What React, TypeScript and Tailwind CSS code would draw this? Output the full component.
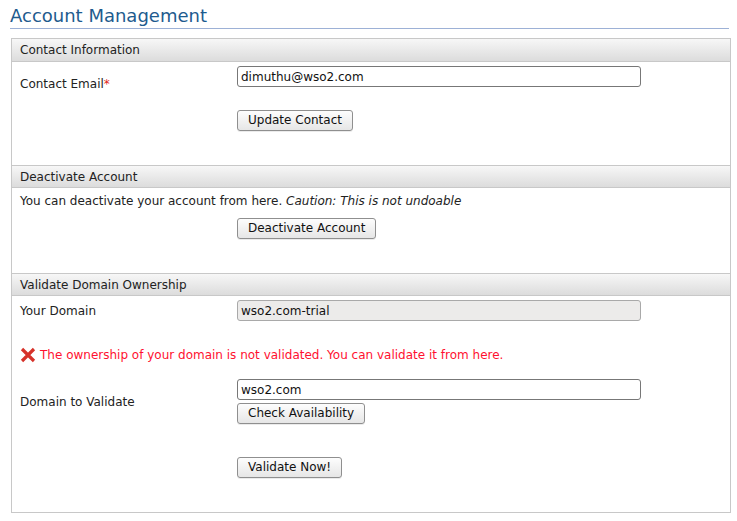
import React from "react";

const font = { fontFamily: '"DejaVu Sans", Verdana, sans-serif' };

function Btn({ children }: { children: React.ReactNode }) {
  return (
    <button className="h-[21px] px-[10px] rounded-[3px] border border-[#8f8f8f] bg-gradient-to-b from-[#fdfdfd] to-[#e6e6e6] text-[12px] leading-[19px] text-[#111] shadow-[0_1px_0_rgba(0,0,0,0.08)]">
      {children}
    </button>
  );
}

function Header({ title, top }: { title: string; top?: boolean }) {
  return (
    <div
      className={
        "h-[23px] pl-[8px] flex items-center bg-gradient-to-b from-[#f7f7f7] to-[#dcdcdc] border-b border-[#c8c8c8] text-[12px] text-[#222] " +
        (top ? "" : "border-t")
      }
    >
      {title}
    </div>
  );
}

function Input({ value, disabled }: { value: string; disabled?: boolean }) {
  return (
    <div
      className={
        "w-[404px] h-[21px] rounded-[3px] border px-[3px] flex items-center text-[12px] text-[#111] " +
        (disabled ? "bg-[#ecebea] border-[#a9a9a9]" : "bg-white border-[#777]")
      }
    >
      {value}
    </div>
  );
}

function XIcon() {
  return (
    <svg width="17" height="16" viewBox="0 0 17 16" className="shrink-0">
      <path d="M2 2 L14 14 M14 2 L2 14" stroke="#d6322a" strokeWidth="3.2" strokeLinecap="butt" />
    </svg>
  );
}

export default function App() {
  return (
    <div className="w-[737px] h-[521px] bg-white" style={font}>
      <div className="pt-[4px] pl-[10px] pr-[8px]">
        <h1 className="text-[18px] leading-[23px] text-[#1e5b8e] pb-[1px] border-b border-[#9db1d6]">
          Account Management
        </h1>
      </div>
      <div className="mt-[9px] ml-[11px] w-[720px] h-[475px] border border-[#c8c8c8] text-[12px] text-[#222]">
        <Header title="Contact Information" top />
        <div className="h-[103px] pl-[8px]">
          <div className="flex">
            <div className="w-[217px] pt-[13px]">
              Contact Email<span className="text-[#e2231a]">*</span>
            </div>
            <div className="pt-[4px]">
              <Input value="dimuthu@wso2.com" />
              <div className="mt-[23px]">
                <Btn>Update Contact</Btn>
              </div>
            </div>
          </div>
        </div>
        <Header title="Deactivate Account" />
        <div className="h-[85px] pl-[8px]">
          <div className="pt-[6px] leading-[15px]">
            You can deactivate your account from here. <i>Caution: This is not undoable</i>
          </div>
          <div className="pl-[217px] mt-[9px]">
            <Btn>Deactivate Account</Btn>
          </div>
        </div>
        <Header title="Validate Domain Ownership" />
        <div className="pl-[8px]">
          <div className="flex pt-[4px]">
            <div className="w-[217px] pt-[2px]">Your Domain</div>
            <Input value="wso2.com-trial" disabled />
          </div>
          <div className="flex items-center mt-[25px] text-[#ff1030]">
            <XIcon />
            <span className="ml-[3px]">
              The ownership of your domain is not validated. You can validate it from here.
            </span>
          </div>
          <div className="flex mt-[15px]">
            <div className="w-[217px] pt-[14px]">Domain to Validate</div>
            <div>
              <Input value="wso2.com" />
              <div className="mt-[3px]">
                <Btn>Check Availability</Btn>
              </div>
              <div className="mt-[33px]">
                <Btn>Validate Now!</Btn>
              </div>
            </div>
          </div>
        </div>
      </div>
    </div>
  );
}
